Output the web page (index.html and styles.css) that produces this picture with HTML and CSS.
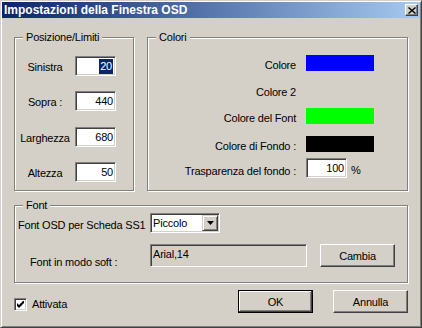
FILE: index.html
```html
<!DOCTYPE html>
<html lang="it">
<head>
    <meta charset="UTF-8">
    <meta name="viewport" content="width=device-width, initial-scale=1.0">
    <title>Impostazioni della Finestra OSD</title>
    <link rel="stylesheet" href="styles.css">
</head>
<body>
    <div class="window">
        <div class="titlebar">
            <span class="title">Impostazioni della Finestra OSD</span>
            <span class="close-btn">
                <svg width="8" height="7" viewBox="0 0 8 7">
                    <path d="M0.5 0.5 L7.5 6.5 M7.5 0.5 L0.5 6.5" stroke="#000" stroke-width="1.4" fill="none"/>
                </svg>
            </span>
        </div>

        <div class="content">
            <div class="top-row">
                <div class="group group-pos">
                    <div class="legend">Posizione/Limiti</div>
                    <div class="pos-grid">
                        <span class="pos-label">Sinistra</span>
                        <div class="edit"><span class="selected">20</span></div>
                        <span class="pos-label">Sopra :</span>
                        <div class="edit">440</div>
                        <span class="pos-label">Larghezza</span>
                        <div class="edit">680</div>
                        <span class="pos-label">Altezza</span>
                        <div class="edit">50</div>
                    </div>
                </div>

                <div class="group group-colors">
                    <div class="legend">Colori</div>
                    <div class="colors-grid">
                        <span class="color-label">Colore</span>
                        <div class="swatch swatch-blue"></div>

                        <span class="color-label">Colore 2</span>
                        <div class="swatch"></div>

                        <span class="color-label">Colore del Font</span>
                        <div class="swatch swatch-green"></div>

                        <span class="color-label">Colore di Fondo :</span>
                        <div class="swatch swatch-black"></div>

                        <span class="color-label color-label-tall">Trasparenza del fondo :</span>
                        <div class="edit edit-small">100</div>
                        <span class="percent">%</span>
                    </div>
                </div>
            </div>

            <div class="group group-font">
                <div class="legend">Font</div>
                <div class="font-grid">
                    <span class="font-label font-label-osd">Font OSD per Scheda SS1</span>
                    <div class="combo">
                        <span class="combo-text">Piccolo</span>
                        <span class="combo-btn">
                            <svg width="7" height="4" viewBox="0 0 7 4"><path d="M0 0 H7 L3.5 4 Z" fill="#000"/></svg>
                        </span>
                    </div>

                    <span class="font-label font-label-soft">Font in modo soft :</span>
                    <div class="soft-row">
                        <div class="readonly-field">Arial,14</div>
                        <button class="btn">Cambia</button>
                    </div>
                </div>
            </div>

            <div class="bottom-row">
                <div class="check-wrap">
                    <span class="checkbox">
                        <svg width="7" height="7" viewBox="0 0 7 7"><path d="M0 2 L0 5 L2 7 L7 2 L7 -1 L2 4 Z" fill="#000"/></svg>
                    </span>
                    <span class="check-label">Attivata</span>
                </div>
                <div class="buttons">
                    <button class="btn btn-default">OK</button>
                    <button class="btn">Annulla</button>
                </div>
            </div>
        </div>
    </div>
</body>
</html>
```

FILE: styles.css
```css
body {
    margin: 0;
    padding: 0;
    background-color: #d4d0c8;
    font-family: 'Liberation Sans', Arial, sans-serif;
    font-size: 11px;
    letter-spacing: -0.2px;
    color: #000;
}

.window {
    box-sizing: border-box;
    width: 422px;
    height: 328px;
    padding: 1px;
    background-color: #d4d0c8;
    border: 1px solid;
    border-color: #d4d0c8 #404040 #404040 #d4d0c8;
    box-shadow: inset 1px 1px 0 #fff, inset -1px -1px 0 #808080;
}

/* title bar */
.titlebar {
    display: flex;
    align-items: center;
    justify-content: space-between;
    height: 16px;
    padding-left: 2px;
    background: linear-gradient(to right, #0a246a, #a6caf0);
}

.titlebar .title {
    color: #fff;
    font-weight: bold;
    font-size: 12px;
    letter-spacing: 0;
    line-height: 16px;
    white-space: nowrap;
}

.close-btn {
    box-sizing: border-box;
    display: flex;
    align-items: center;
    justify-content: center;
    width: 13px;
    height: 12px;
    margin-right: 2px;
    background-color: #d4d0c8;
    border: 1px solid;
    border-color: #fff #404040 #404040 #fff;
    box-shadow: inset -1px -1px 0 #808080;
}

.content {
    padding: 0 12px;
}

/* group boxes */
.top-row {
    display: flex;
    justify-content: space-between;
    margin-top: 19px;
}

.group {
    box-sizing: border-box;
    border: 1px solid #808080;
    box-shadow: inset 1px 1px 0 #fff, 1px 1px 0 #fff;
}

.legend {
    width: fit-content;
    margin: -7px 0 0 8px;
    padding: 0 3px;
    line-height: 13px;
    background-color: #d4d0c8;
    white-space: nowrap;
}

.group-pos {
    width: 120px;
    height: 154px;
}

.group-colors {
    width: 261px;
    height: 154px;
}

.group-font {
    width: 394px;
    height: 78px;
    margin-top: 14px;
}

/* Posizione/Limiti */
.pos-grid {
    display: grid;
    grid-template-columns: 60px 41px;
    grid-template-rows: repeat(4, 20px);
    row-gap: 15.33px;
    margin-top: 12px;
}

.pos-label {
    text-align: center;
    line-height: 20px;
    padding-top: 1px;
    white-space: nowrap;
}

.edit {
    box-sizing: border-box;
    height: 20px;
    padding-right: 2px;
    background-color: #fff;
    border: 1px solid;
    border-color: #808080 #fff #fff #808080;
    box-shadow: inset 1px 1px 0 #404040, inset -1px -1px 0 #d4d0c8;
    text-align: right;
    line-height: 18px;
}

.edit .selected {
    display: inline-block;
    padding: 0 1px;
    line-height: 15px;
    background-color: #0a246a;
    color: #fff;
}

/* Colori */
.colors-grid {
    display: grid;
    grid-template-columns: 158px 41px auto;
    grid-template-rows: 27px 26px 28px 22px 20px;
    align-items: start;
    margin-top: 11px;
}

.color-label {
    padding-right: 10px;
    text-align: right;
    line-height: 16px;
    padding-top: 2px;
    white-space: nowrap;
}

.color-label-tall {
    line-height: 20px;
    padding-top: 3px;
}

.swatch {
    grid-column: span 2;
    width: 68px;
    height: 16px;
}

.swatch-blue { background-color: #0000ff; }
.swatch-green { background-color: #00ff00; }
.swatch-black { background-color: #000; }

.edit-small {
    width: 41px;
}

.percent {
    padding-left: 4px;
    line-height: 20px;
    padding-top: 2px;
}

/* Font */
.font-grid {
    display: grid;
    grid-template-columns: 135px auto;
    grid-template-rows: 20px 23px;
    row-gap: 11px;
    margin-top: 1px;
}

.font-label {
    white-space: nowrap;
}

.font-label-osd {
    padding-left: 3px;
    line-height: 20px;
    padding-top: 2px;
}

.font-label-soft {
    padding-left: 15px;
    line-height: 23px;
    padding-top: 7px;
}

.combo {
    box-sizing: border-box;
    display: flex;
    justify-content: space-between;
    width: 70px;
    height: 20px;
    padding: 1px;
    background-color: #fff;
    border: 1px solid;
    border-color: #808080 #fff #fff #808080;
    box-shadow: inset 1px 1px 0 #404040, inset -1px -1px 0 #d4d0c8;
}

.combo-text {
    padding-left: 1px;
    line-height: 16px;
}

.combo-btn {
    box-sizing: border-box;
    display: flex;
    align-items: center;
    justify-content: center;
    width: 16px;
    height: 16px;
    background-color: #d4d0c8;
    border: 1px solid;
    border-color: #d4d0c8 #404040 #404040 #d4d0c8;
    box-shadow: inset 1px 1px 0 #fff, inset -1px -1px 0 #808080;
}

.soft-row {
    display: flex;
    gap: 13px;
}

.readonly-field {
    box-sizing: border-box;
    width: 157px;
    height: 23px;
    padding: 2px 0 0 2px;
    border: 1px solid;
    border-color: #808080 #fff #fff #808080;
    box-shadow: inset 1px 1px 0 #404040, inset -1px -1px 0 #d4d0c8;
    line-height: 14px;
}

/* buttons */
.btn {
    box-sizing: border-box;
    width: 75px;
    height: 23px;
    padding: 0;
    font-family: inherit;
    font-size: 11px;
    letter-spacing: inherit;
    color: #000;
    background-color: #d4d0c8;
    border: 1px solid;
    border-color: #fff #404040 #404040 #fff;
    border-radius: 0;
    box-shadow: inset -1px -1px 0 #808080;
}

.btn-default {
    border: 1px solid #000;
    box-shadow: inset -1px -1px 0 #404040, inset 1px 1px 0 #fff, inset -2px -2px 0 #808080;
}

.bottom-row {
    display: flex;
    justify-content: space-between;
    align-items: flex-start;
    margin-top: 7px;
}

.check-wrap {
    display: flex;
    align-items: center;
    gap: 5px;
    margin-top: 8px;
}

.checkbox {
    box-sizing: border-box;
    display: flex;
    align-items: center;
    justify-content: center;
    width: 13px;
    height: 13px;
    background-color: #fff;
    border: 1px solid;
    border-color: #808080 #fff #fff #808080;
    box-shadow: inset 1px 1px 0 #404040, inset -1px -1px 0 #d4d0c8;
}

.check-label {
    line-height: 13px;
}

.buttons {
    display: flex;
    gap: 20px;
}
```
